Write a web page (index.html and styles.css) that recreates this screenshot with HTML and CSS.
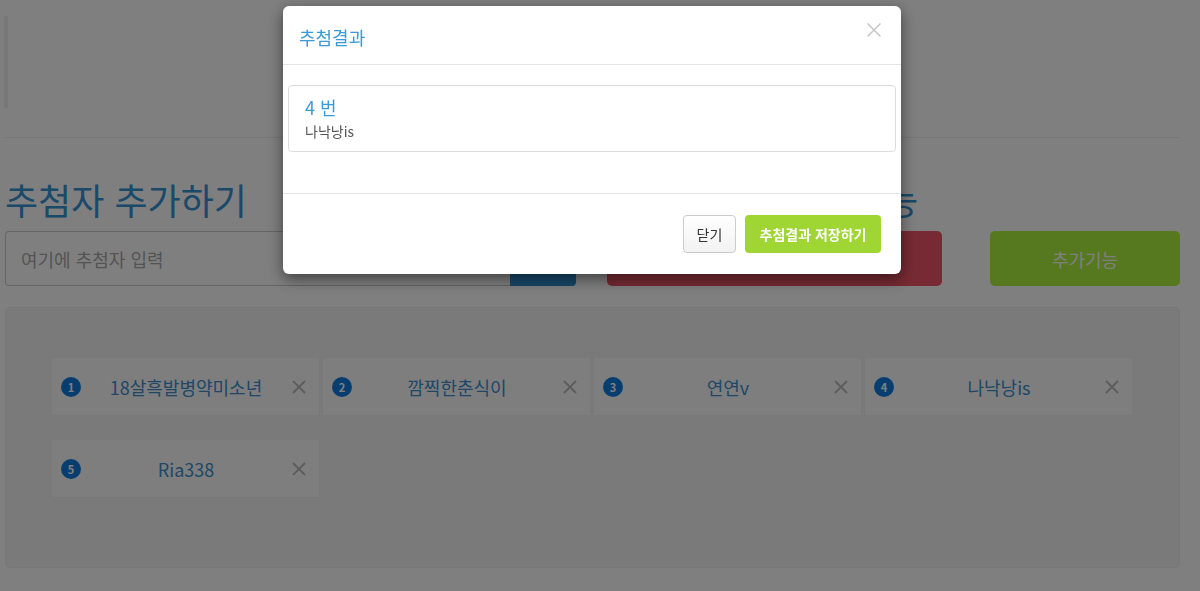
FILE: index.html
```html
<!DOCTYPE html>
<html lang="ko">
<head>
<meta charset="utf-8">
<title>추첨</title>
<link rel="stylesheet" href="styles.css">
</head>
<body>
<div class="page">
  <div class="quote"></div>
  <hr class="rule">
  <div class="heads">
    <h2 class="head head-left">추첨자 추가하기</h2>
    <h2 class="head head-right">랜덤추첨 및 부가기능</h2>
  </div>
  <div class="controls">
    <div class="input-group">
      <input class="field" type="text" placeholder="여기에 추첨자 입력">
      <button class="btn-add">추가</button>
    </div>
    <button class="btn-draw">추첨하기</button>
    <button class="btn-extra">추가기능</button>
  </div>
  <div class="well">
    <div class="chip"><span class="badge">1</span><span class="name">18살흑발병약미소년</span><span class="x"><svg viewBox="0 0 16 16" width="16" height="16"><path d="M2 2L14 14M14 2L2 14" stroke="currentColor" stroke-width="1.8" fill="none"/></svg></span></div>
    <div class="chip"><span class="badge">2</span><span class="name">깜찍한춘식이</span><span class="x"><svg viewBox="0 0 16 16" width="16" height="16"><path d="M2 2L14 14M14 2L2 14" stroke="currentColor" stroke-width="1.8" fill="none"/></svg></span></div>
    <div class="chip"><span class="badge">3</span><span class="name">연연v</span><span class="x"><svg viewBox="0 0 16 16" width="16" height="16"><path d="M2 2L14 14M14 2L2 14" stroke="currentColor" stroke-width="1.8" fill="none"/></svg></span></div>
    <div class="chip"><span class="badge">4</span><span class="name">나낙낭is</span><span class="x"><svg viewBox="0 0 16 16" width="16" height="16"><path d="M2 2L14 14M14 2L2 14" stroke="currentColor" stroke-width="1.8" fill="none"/></svg></span></div>
    <div class="chip"><span class="badge">5</span><span class="name">Ria338</span><span class="x"><svg viewBox="0 0 16 16" width="16" height="16"><path d="M2 2L14 14M14 2L2 14" stroke="currentColor" stroke-width="1.8" fill="none"/></svg></span></div>
  </div>
</div>

<div class="backdrop"></div>
<div class="modal-wrap">
  <div class="modal">
    <div class="modal-header">
      <h4 class="modal-title">추첨결과</h4>
      <span class="modal-close"><svg viewBox="0 0 16 16" width="16" height="16"><path d="M1.5 1.5L14.5 14.5M14.5 1.5L1.5 14.5" stroke="currentColor" stroke-width="1.6" fill="none"/></svg></span>
    </div>
    <div class="modal-body">
      <div class="result">
        <div class="result-num">4 번</div>
        <div class="result-name">나낙낭is</div>
      </div>
    </div>
    <div class="modal-footer">
      <button class="btn-close">닫기</button>
      <button class="btn-save">추첨결과 저장하기</button>
    </div>
  </div>
</div>
</body>
</html>
```

FILE: styles.css
```css
* { box-sizing: border-box; }
html, body { margin: 0; padding: 0; background: #fff; }
body {
  font-family: "Noto Sans CJK KR", "Noto Sans", sans-serif;
  color: #333;
  width: 1200px;
  height: 591px;
  overflow: hidden;
}
.page {
  padding: 0 20px 0 5px;
  width: 1200px;
}
.quote {
  margin: 16px 0 0 -1px;
  height: 92px;
  border-left: 4px solid #eee;
}
.rule {
  margin: 29px 0 0 0;
  border: 0;
  border-top: 1px solid #eee;
  height: 0;
}
.heads {
  display: flex;
  margin-top: 42px;
  height: 39px;
}
.head {
  margin: 0;
  font-size: 36px;
  line-height: 39px;
  font-weight: 400;
  color: #3592d4;
  white-space: nowrap;
}
.head-left { width: 595px; }
.controls {
  display: flex;
  margin-top: 12px;
  height: 55px;
}
.input-group {
  display: flex;
  width: 571px;
}
.field {
  width: 505px;
  height: 55px;
  border: 1px solid #cbcbcb;
  border-right: 0;
  border-radius: 4px 0 0 4px;
  padding: 0 15px;
  font-family: inherit;
  font-size: 18px;
  color: #555;
  outline: none;
}
.field::placeholder { color: #a8a8a8; }
.btn-add {
  width: 66px;
  height: 55px;
  border: 0;
  border-radius: 0 4px 4px 0;
  background: #2e8fd4;
  color: #fff;
  font-family: inherit;
  font-size: 18px;
}
.btn-draw {
  margin-left: 31px;
  width: 335px;
  height: 55px;
  border: 0;
  border-radius: 5px;
  background: #ef5566;
  color: #fff;
  font-family: inherit;
  font-size: 18px;
}
.btn-extra {
  margin-left: 48px;
  width: 190px;
  height: 55px;
  border: 0;
  border-radius: 5px;
  background: #adf03e;
  color: #fff;
  font-family: inherit;
  font-size: 18px;
}
.well {
  margin-top: 21px;
  height: 261px;
  background: #f5f5f5;
  border: 1px solid #eee;
  border-radius: 5px;
  padding: 49px 40px 49px 45px;
  display: flex;
  flex-wrap: wrap;
  align-content: flex-start;
  column-gap: 2px;
  row-gap: 23px;
}
.chip {
  width: 269px;
  height: 59px;
  background: #fcfcfc;
  border: 1px solid #f2f2f2;
  display: flex;
  align-items: center;
  padding: 0 12px 0 9px;
}
.badge {
  width: 20px;
  height: 20px;
  border-radius: 50%;
  background: #0f7ddf;
  color: #fff;
  font-size: 11px;
  font-weight: 700;
  display: flex;
  align-items: center;
  justify-content: center;
  flex: none;
}
.name {
  flex: 1;
  text-align: center;
  font-size: 18px;
  color: #3c8fd0;
  line-height: 24px;
}
.x {
  color: #b9b9b9;
  display: flex;
  flex: none;
}
.backdrop {
  position: fixed;
  inset: 0;
  background: rgba(0, 0, 0, 0.5);
}
.modal-wrap {
  position: fixed;
  inset: 0;
}
.modal {
  margin: 6px 0 0 283px;
  width: 618px;
  background: #fff;
  border-radius: 6px;
  box-shadow: 0 5px 15px rgba(0, 0, 0, 0.5);
}
.modal-header {
  height: 59px;
  border-bottom: 1px solid #e5e5e5;
  display: flex;
  align-items: center;
  justify-content: space-between;
  padding: 0 19px 0 16px;
}
.modal-title {
  margin: 0;
  font-size: 18px;
  font-weight: 400;
  color: #3a9ad9;
  line-height: 24px;
  margin-top: 4px;
}
.modal-close {
  color: #c8c8c8;
  display: flex;
  margin-top: -10px;
}
.modal-body {
  padding: 20px 5px 41px;
}
.result {
  border: 1px solid #ddd;
  border-radius: 4px;
  height: 67px;
  padding: 9px 16px 0;
}
.result-num {
  font-size: 18px;
  color: #3a9ad9;
  line-height: 24px;
}
.result-name {
  font-size: 14px;
  color: #555;
  line-height: 20px;
  margin-top: 2px;
}
.modal-footer {
  border-top: 1px solid #e5e5e5;
  padding: 21px 20px 21px;
  display: flex;
  justify-content: flex-end;
  gap: 9px;
}
.btn-close {
  width: 53px;
  height: 38px;
  border: 1px solid #ccc;
  border-radius: 4px;
  background: linear-gradient(#fff, #f2f2f2);
  color: #333;
  font-family: inherit;
  font-size: 14px;
}
.btn-save {
  width: 136px;
  height: 38px;
  border: 0;
  border-radius: 4px;
  background: #9fd633;
  color: #fff;
  font-family: inherit;
  font-size: 14px;
  font-weight: 700;
}
```
